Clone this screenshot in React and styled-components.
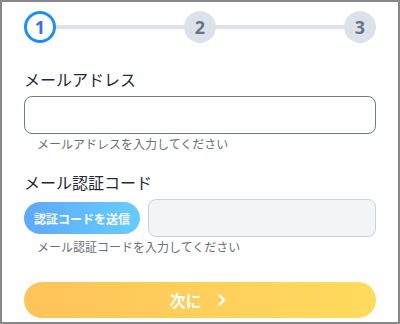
import React from 'react';
import styled, { createGlobalStyle } from 'styled-components';

const GlobalStyle = createGlobalStyle`
  html, body {
    margin: 0;
    padding: 0;
    background: #ffffff;
  }
  * {
    box-sizing: border-box;
  }
`;

const Frame = styled.div`
  width: 400px;
  height: 324px;
  border: 2px solid #888888;
  background: #ffffff;
  padding: 9px 22px 0;
  font-family: 'Noto Sans CJK JP', 'Noto Sans', sans-serif;
  color: #1f2937;
`;

const Stepper = styled.div`
  display: flex;
  align-items: center;
  height: 32px;
`;

const Step = styled.div`
  width: 32px;
  height: 32px;
  flex: none;
  border-radius: 50%;
  display: flex;
  align-items: center;
  justify-content: center;
  font-family: 'Open Sans', 'Noto Sans', sans-serif;
  font-size: 18px;
  font-weight: 700;
  line-height: 1;
  background: ${(p) => (p.$active ? '#ffffff' : '#dde1ea')};
  border: ${(p) => (p.$active ? '3px solid #1e8cff' : 'none')};
  color: ${(p) => (p.$active ? '#3a6cf5' : '#6b7385')};
`;

const Line = styled.div`
  flex: 1;
  height: 4px;
  background: #dde1ea;
`;

const Label = styled.div`
  font-size: 16px;
  line-height: 24px;
  margin-top: ${(p) => p.$top}px;
  margin-bottom: 5px;
  color: #1f2937;
`;

const Input = styled.input`
  display: block;
  width: 100%;
  height: 38px;
  border-radius: 8px;
  border: 1px solid ${(p) => (p.$muted ? '#cdd1d9' : '#6f7c8e')};
  background: ${(p) => (p.$muted ? '#f3f4f6' : '#ffffff')};
  padding: 0 12px;
  font-size: 14px;
  outline: none;
`;

const Help = styled.div`
  font-size: 12px;
  line-height: 16px;
  margin-top: 2px;
  padding-left: 13px;
  color: #6b6f76;
`;

const CodeRow = styled.div`
  display: flex;
  align-items: center;
  gap: 8px;
`;

const SendButton = styled.button`
  flex: none;
  width: 116px;
  height: 32px;
  border: none;
  border-radius: 16px;
  background: linear-gradient(90deg, #5fa8fb 0%, #66cdfe 100%);
  color: #ffffff;
  font-family: inherit;
  font-size: 12px;
  font-weight: 700;
  padding: 0;
`;

const NextButton = styled.button`
  display: flex;
  align-items: center;
  justify-content: center;
  gap: 16px;
  width: 100%;
  height: 36px;
  margin-top: 27px;
  border: none;
  border-radius: 18px;
  background: linear-gradient(90deg, #ffc35a 0%, #ffdb5c 100%);
  color: #ffffff;
  font-family: inherit;
  font-size: 16px;
  font-weight: 700;
  padding: 0 5px 0 0;
`;

export default function App() {
  return (
    <>
      <GlobalStyle />
      <Frame>
        <Stepper>
          <Step $active>1</Step>
          <Line />
          <Step>2</Step>
          <Line />
          <Step>3</Step>
        </Stepper>

        <Label $top={24}>メールアドレス</Label>
        <Input type="email" />
        <Help>メールアドレスを入力してください</Help>

        <Label $top={18}>メール認証コード</Label>
        <CodeRow>
          <SendButton>認証コードを送信</SendButton>
          <Input $muted />
        </CodeRow>
        <Help>メール認証コードを入力してください</Help>

        <NextButton>
          <span>次に</span>
          <svg width="8" height="12" viewBox="0 0 8 12">
            <polyline
              points="1.5,1.5 6,6 1.5,10.5"
              fill="none"
              stroke="#ffffff"
              strokeWidth="2.4"
              strokeLinecap="round"
              strokeLinejoin="round"
            />
          </svg>
        </NextButton>
      </Frame>
    </>
  );
}
